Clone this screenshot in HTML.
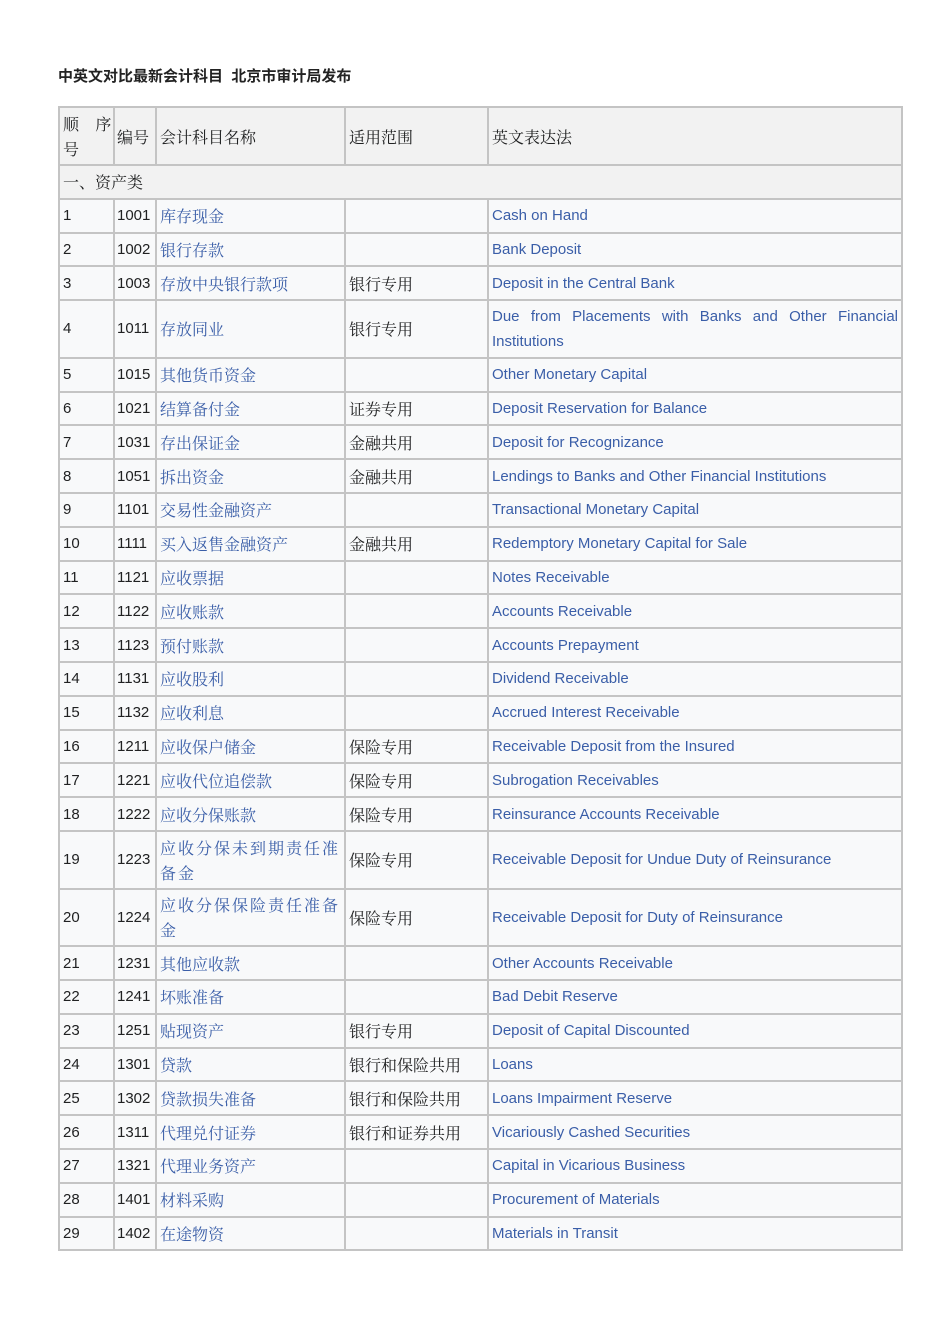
<!DOCTYPE html>
<html><head><meta charset="utf-8"><style>
body{margin:0;background:#fff;width:950px;height:1344px;position:relative;font-family:"Liberation Sans","Noto Sans CJK SC",sans-serif;}
h1{position:absolute;left:58px;top:65px;margin:0;font-size:15px;font-weight:bold;color:#222;}
table{position:absolute;left:58px;top:106px;border-collapse:collapse;table-layout:fixed;width:843px;}
td{border:2px solid #c4c4c4;background:#f8f9fa;font-size:15px;color:#202122;padding:0 3px;vertical-align:middle;line-height:25px;overflow:hidden}
tr{height:33.8px}
.h td{background:#f2f2f2;height:56px}
.s td{background:#f2f2f2}
.d{height:57.6px}
.c{font-family:"Noto Serif CJK SC",serif;font-size:16px}
.b{color:#3a5ea8}
.j{text-align:justify;text-align-last:left}
.n{padding:0 2px}
</style></head><body>
<h1>中英文对比最新会计科目&nbsp;&nbsp;北京市审计局发布</h1>
<table>
<colgroup><col style="width:55px"><col style="width:42px"><col style="width:189px"><col style="width:143px"><col style="width:414px"></colgroup>
<tr class="h"><td class="c" style="text-align:justify">顺&nbsp;&nbsp;&nbsp;&nbsp;序<br>号</td><td class="c n">编号</td><td class="c">会计科目名称</td><td class="c">适用范围</td><td class="c">英文表达法</td></tr>
<tr class="s"><td colspan="5" class="c">一、资产类</td></tr>
<tr><td>1</td><td class="n">1001</td><td class="c b">库存现金</td><td></td><td class="b">Cash on Hand</td></tr>
<tr><td>2</td><td class="n">1002</td><td class="c b">银行存款</td><td></td><td class="b">Bank Deposit</td></tr>
<tr><td>3</td><td class="n">1003</td><td class="c b">存放中央银行款项</td><td class="c">银行专用</td><td class="b">Deposit in the Central Bank</td></tr>
<tr class="d"><td>4</td><td class="n">1011</td><td class="c b">存放同业</td><td class="c">银行专用</td><td class="b j">Due from Placements with Banks and Other Financial Institutions</td></tr>
<tr><td>5</td><td class="n">1015</td><td class="c b">其他货币资金</td><td></td><td class="b">Other Monetary Capital</td></tr>
<tr><td>6</td><td class="n">1021</td><td class="c b">结算备付金</td><td class="c">证券专用</td><td class="b">Deposit Reservation for Balance</td></tr>
<tr><td>7</td><td class="n">1031</td><td class="c b">存出保证金</td><td class="c">金融共用</td><td class="b">Deposit for Recognizance</td></tr>
<tr><td>8</td><td class="n">1051</td><td class="c b">拆出资金</td><td class="c">金融共用</td><td class="b">Lendings to Banks and Other Financial Institutions</td></tr>
<tr><td>9</td><td class="n">1101</td><td class="c b">交易性金融资产</td><td></td><td class="b">Transactional Monetary Capital</td></tr>
<tr><td>10</td><td class="n">1111</td><td class="c b">买入返售金融资产</td><td class="c">金融共用</td><td class="b">Redemptory Monetary Capital for Sale</td></tr>
<tr><td>11</td><td class="n">1121</td><td class="c b">应收票据</td><td></td><td class="b">Notes Receivable</td></tr>
<tr><td>12</td><td class="n">1122</td><td class="c b">应收账款</td><td></td><td class="b">Accounts Receivable</td></tr>
<tr><td>13</td><td class="n">1123</td><td class="c b">预付账款</td><td></td><td class="b">Accounts Prepayment</td></tr>
<tr><td>14</td><td class="n">1131</td><td class="c b">应收股利</td><td></td><td class="b">Dividend Receivable</td></tr>
<tr><td>15</td><td class="n">1132</td><td class="c b">应收利息</td><td></td><td class="b">Accrued Interest Receivable</td></tr>
<tr><td>16</td><td class="n">1211</td><td class="c b">应收保户储金</td><td class="c">保险专用</td><td class="b">Receivable Deposit from the Insured</td></tr>
<tr><td>17</td><td class="n">1221</td><td class="c b">应收代位追偿款</td><td class="c">保险专用</td><td class="b">Subrogation Receivables</td></tr>
<tr><td>18</td><td class="n">1222</td><td class="c b">应收分保账款</td><td class="c">保险专用</td><td class="b">Reinsurance Accounts Receivable</td></tr>
<tr class="d"><td>19</td><td class="n">1223</td><td class="c b" style="letter-spacing:2px">应收分保未到期责任准备金</td><td class="c">保险专用</td><td class="b">Receivable Deposit for Undue Duty of Reinsurance</td></tr>
<tr class="d"><td>20</td><td class="n">1224</td><td class="c b" style="letter-spacing:2px">应收分保保险责任准备金</td><td class="c">保险专用</td><td class="b">Receivable Deposit for Duty of Reinsurance</td></tr>
<tr><td>21</td><td class="n">1231</td><td class="c b">其他应收款</td><td></td><td class="b">Other Accounts Receivable</td></tr>
<tr><td>22</td><td class="n">1241</td><td class="c b">坏账准备</td><td></td><td class="b">Bad Debit Reserve</td></tr>
<tr><td>23</td><td class="n">1251</td><td class="c b">贴现资产</td><td class="c">银行专用</td><td class="b">Deposit of Capital Discounted</td></tr>
<tr><td>24</td><td class="n">1301</td><td class="c b">贷款</td><td class="c">银行和保险共用</td><td class="b">Loans</td></tr>
<tr><td>25</td><td class="n">1302</td><td class="c b">贷款损失准备</td><td class="c">银行和保险共用</td><td class="b">Loans Impairment Reserve</td></tr>
<tr><td>26</td><td class="n">1311</td><td class="c b">代理兑付证券</td><td class="c">银行和证券共用</td><td class="b">Vicariously Cashed Securities</td></tr>
<tr><td>27</td><td class="n">1321</td><td class="c b">代理业务资产</td><td></td><td class="b">Capital in Vicarious Business</td></tr>
<tr><td>28</td><td class="n">1401</td><td class="c b">材料采购</td><td></td><td class="b">Procurement of Materials</td></tr>
<tr><td>29</td><td class="n">1402</td><td class="c b">在途物资</td><td></td><td class="b">Materials in Transit</td></tr>
</table>
</body></html>
